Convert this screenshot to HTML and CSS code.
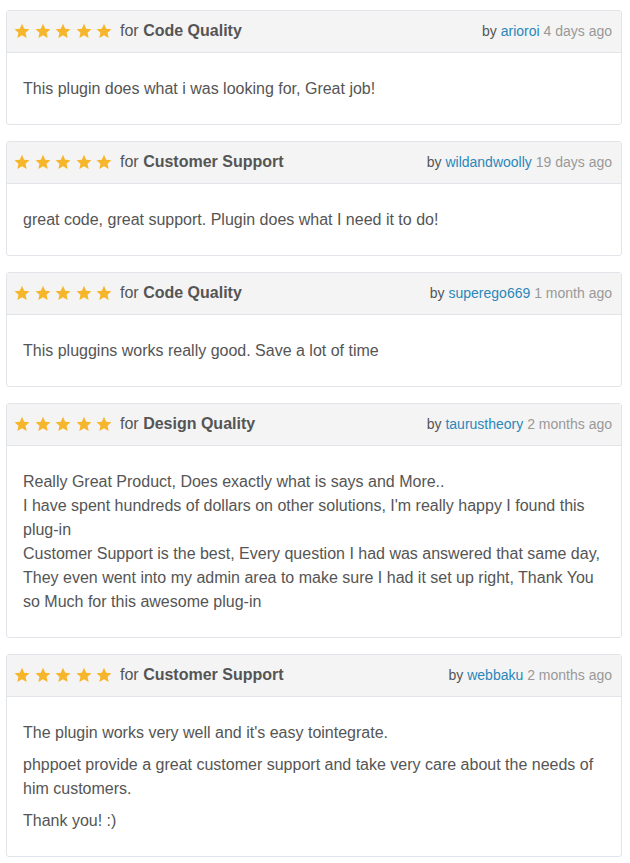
FILE: index.html
```html
<!DOCTYPE html>
<html>
<head>
    <title>Reviews</title>
    <link rel="stylesheet" href="styles.css">
</head>
<body>
    <svg width="0" height="0" class="defs">
        <defs>
            <symbol id="star" viewBox="0 0 24 24">
                <path d="M12 1.2l3.3 7.3 7.9.8-5.9 5.4 1.7 7.9L12 18.5l-7 4.1 1.7-7.9L.8 9.3l7.9-.8z"/>
            </symbol>
        </defs>
    </svg>

    <div class="review">
        <div class="review-header">
            <div class="rating">
                <span class="stars"><svg><use href="#star"/></svg><svg><use href="#star"/></svg><svg><use href="#star"/></svg><svg><use href="#star"/></svg><svg><use href="#star"/></svg></span>
                <span class="for">for <strong>Code Quality</strong></span>
            </div>
            <div class="meta">by <a href="#">arioroi</a> <span class="time">4 days ago</span></div>
        </div>
        <div class="review-body">
            <p>This plugin does what i was looking for, Great job!</p>
        </div>
    </div>

    <div class="review">
        <div class="review-header">
            <div class="rating">
                <span class="stars"><svg><use href="#star"/></svg><svg><use href="#star"/></svg><svg><use href="#star"/></svg><svg><use href="#star"/></svg><svg><use href="#star"/></svg></span>
                <span class="for">for <strong>Customer Support</strong></span>
            </div>
            <div class="meta">by <a href="#">wildandwoolly</a> <span class="time">19 days ago</span></div>
        </div>
        <div class="review-body">
            <p>great code, great support. Plugin does what I need it to do!</p>
        </div>
    </div>

    <div class="review">
        <div class="review-header">
            <div class="rating">
                <span class="stars"><svg><use href="#star"/></svg><svg><use href="#star"/></svg><svg><use href="#star"/></svg><svg><use href="#star"/></svg><svg><use href="#star"/></svg></span>
                <span class="for">for <strong>Code Quality</strong></span>
            </div>
            <div class="meta">by <a href="#">superego669</a> <span class="time">1 month ago</span></div>
        </div>
        <div class="review-body">
            <p>This pluggins works really good. Save a lot of time</p>
        </div>
    </div>

    <div class="review">
        <div class="review-header">
            <div class="rating">
                <span class="stars"><svg><use href="#star"/></svg><svg><use href="#star"/></svg><svg><use href="#star"/></svg><svg><use href="#star"/></svg><svg><use href="#star"/></svg></span>
                <span class="for">for <strong>Design Quality</strong></span>
            </div>
            <div class="meta">by <a href="#">taurustheory</a> <span class="time">2 months ago</span></div>
        </div>
        <div class="review-body">
            <p>Really Great Product, Does exactly what is says and More..<br>
            I have spent hundreds of dollars on other solutions, I'm really happy I found this plug-in<br>
            Customer Support is the best, Every question I had was answered that same day, They even went into my admin area to make sure I had it set up right, Thank You so Much for this awesome plug-in</p>
        </div>
    </div>

    <div class="review">
        <div class="review-header">
            <div class="rating">
                <span class="stars"><svg><use href="#star"/></svg><svg><use href="#star"/></svg><svg><use href="#star"/></svg><svg><use href="#star"/></svg><svg><use href="#star"/></svg></span>
                <span class="for">for <strong>Customer Support</strong></span>
            </div>
            <div class="meta">by <a href="#">webbaku</a> <span class="time">2 months ago</span></div>
        </div>
        <div class="review-body">
            <p>The plugin works very well and it's easy tointegrate.</p>
            <p>phppoet provide a great customer support and take very care about the needs of him customers.</p>
            <p>Thank you! :)</p>
        </div>
    </div>
</body>
</html>
```

FILE: styles.css
```css
body {
    font-family: "Liberation Sans", Arial, sans-serif;
    color: #555;
    margin: 0;
    padding: 10px 8px 6px 6px;
    background: #fff;
}
.defs {
    position: absolute;
}
.review {
    border: 1px solid #e1e5ea;
    border-radius: 3px;
    margin-bottom: 16px;
}
.review-header {
    display: flex;
    justify-content: space-between;
    align-items: center;
    box-sizing: border-box;
    height: 42px;
    padding: 0 9px 1px 7px;
    background-color: #f4f4f4;
    border-bottom: 1px solid #e1e5ea;
}
.rating {
    display: flex;
    align-items: center;
}
.stars {
    display: flex;
    gap: 4.5px;
    margin-right: 8px;
}
.stars svg {
    width: 16px;
    height: 16px;
    fill: #f6b62b;
}
.for {
    font-size: 16px;
}
.for strong {
    font-weight: bold;
}
.meta {
    font-size: 14px;
}
.meta a {
    color: #2b87ba;
    text-decoration: none;
}
.time {
    color: #999;
}
.review-body {
    padding: 24px 16px 15px 16px;
    font-size: 16px;
    line-height: 24px;
}
.review-body p {
    margin: 0 0 8px 0;
}
```
